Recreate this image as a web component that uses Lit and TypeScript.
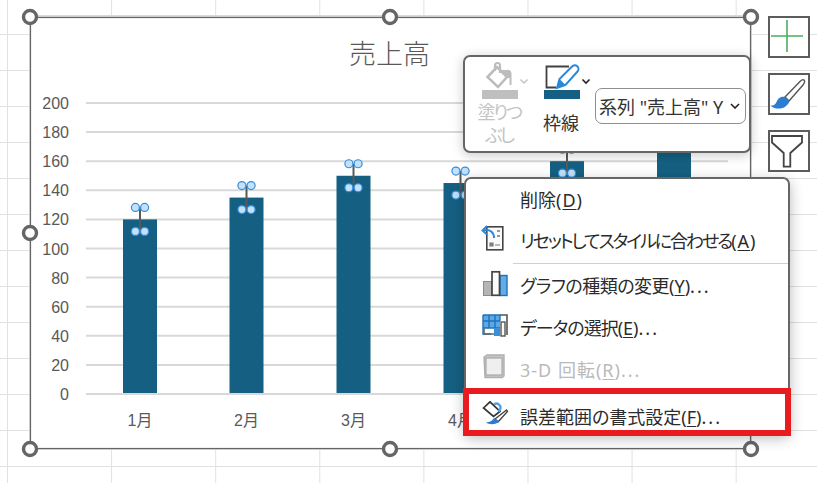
import { LitElement, html, css, svg } from "lit";
import { customElement } from "lit/decorators.js";

const BARS = [
  { label: "1月", x: 140, value: 120 },
  { label: "2月", x: 246.5, value: 135 },
  { label: "3月", x: 353.5, value: 150 },
  { label: "4月", x: 460.5, value: 145 },
  { label: "", x: 567, value: 160 },
  { label: "", x: 674, value: 180 },
];
const TICKS = [200, 180, 160, 140, 120, 100, 80, 60, 40, 20, 0];
const HANDLES = [
  [30, 17], [390, 17], [751, 17],
  [30, 233], [30, 449], [390, 449], [751, 449],
];
const yOf = (v: number) => 394 - v * 1.455;

@customElement("chart-view")
class ChartView extends LitElement {
  static styles = css`
    :host { display: block; }
    svg { display: block; }
    .tick { font: 16px "Liberation Sans", sans-serif; fill: #595959; text-anchor: end; }
    .cat { font: 16px "Liberation Sans", "Noto Sans CJK JP", sans-serif; fill: #595959; text-anchor: middle; }
    .title { font: 300 27px "Noto Sans CJK JP", sans-serif; fill: #595959; text-anchor: middle; }
  `;

  pair(cx: number, cy: number) {
    return svg`
      <circle cx=${cx - 4.6} cy=${cy} r="4" fill="#c5e0f7" stroke="#2f8fe0" stroke-width="1.2"></circle>
      <circle cx=${cx + 4.6} cy=${cy} r="4" fill="#c5e0f7" stroke="#2f8fe0" stroke-width="1.2"></circle>`;
  }

  render() {
    return html`<svg width="817" height="483" viewBox="0 0 817 483">
      <rect x="30" y="16" width="721" height="433" fill="#fff" stroke="#d9d9d9" stroke-width="2"></rect>
      <rect x="30.5" y="17.5" width="720" height="431" fill="none" stroke="#666" stroke-width="1.2"></rect>
      <text class="title" x="389.5" y="64">売上高</text>
      ${TICKS.map((t) => svg`
        <line x1="86" x2="728" y1=${yOf(t)} y2=${yOf(t)} stroke="#d9d9d9" stroke-width="2"></line>
        <text class="tick" x="69" y=${yOf(t) + 6}>${t}</text>`)}
      ${BARS.map((b) => svg`
        <rect x=${b.x - 17} y=${yOf(b.value)} width="34" height=${393 - yOf(b.value)} fill="#156082"></rect>
        <text class="cat" x=${b.x} y="426">${b.label}</text>`)}
      ${BARS.map((b) => svg`
        <line x1=${b.x} x2=${b.x} y1=${yOf(b.value) - 12} y2=${yOf(b.value) + 12} stroke="#595959" stroke-width="2"></line>
        ${this.pair(b.x, yOf(b.value) - 12)}
        ${this.pair(b.x, yOf(b.value) + 12)}`)}
      ${HANDLES.map(([x, y]) => svg`
        <circle cx=${x} cy=${y} r="6.5" fill="#fff" stroke="#666" stroke-width="3.4"></circle>`)}
    </svg>`;
  }
}

@customElement("chart-toolbar")
class ChartToolbar extends LitElement {
  static styles = css`
    :host {
      position: absolute; left: 463px; top: 55px;
      box-sizing: border-box; width: 288px; height: 98px;
      display: flex; align-items: flex-start;
      padding: 3px 0 0 5px;
      background: #fff;
      border: 2px solid #666;
      border-radius: 7px;
      box-shadow: 0 2px 12px rgba(0, 0, 0, .22);
      font-family: "Noto Sans", "Noto Sans CJK JP", sans-serif;
      font-feature-settings: "palt";
      color: #333;
    }
    .col { display: flex; flex-direction: column; align-items: center; }
    .fill { width: 62px; margin-right: 2px; color: #c4c4c4; }
    .line { width: 60px; margin-right: 1px; }
    svg { display: block; }
    .label { font-size: 18px; line-height: 23px; text-align: center; white-space: nowrap; }
    .fill .label { margin: 1px 4px 0 0; letter-spacing: -2.3px; }
    .line .label { margin: 12px 6px 0 0; }
    .picker {
      box-sizing: border-box; width: 151px; height: 36px; margin-top: 28px;
      display: flex; align-items: center; justify-content: space-between;
      padding: 0 5px 0 3px;
      border: 1px solid #8f8f8f; border-radius: 7px;
      font-size: 18px; white-space: nowrap; color: #333;
    }
  `;

  render() {
    return html`
      <div class="col fill">
        <svg width="62" height="40" viewBox="470 60 62 40">
          <path d="M487.5 77 L497 67 L507 77 L498 87 Z" fill="#fff" stroke="#bdbdbd" stroke-width="2.6"></path>
          <path d="M495 71 V65.5 a2.5 2.5 0 0 1 5 0 V73" fill="none" stroke="#bdbdbd" stroke-width="2.2"></path>
          <path d="M501 70 h6 a3.5 3.5 0 0 1 4.5 3.5 V85 h-2 V78 h-3 Z" fill="#bdbdbd"></path>
          <rect x="482" y="90" width="36" height="9" fill="#bfbfbf"></rect>
          <path d="M520.5 79.5 L524 83 L527.5 79.5" fill="none" stroke="#c4c4c4" stroke-width="1.5"></path>
        </svg>
        <div class="label">塗りつ<br />ぶし</div>
      </div>
      <div class="col line">
        <svg width="60" height="40" viewBox="534 60 60 40">
          <path d="M569 66.5 H546.5 V87.5 H556" fill="none" stroke="#404040" stroke-width="1.8"></path>
          <path d="M557 88 L559.5 79 L572 66.5 a3.6 3.6 0 0 1 5.5 5 L565.5 85 Z" fill="#fff" stroke="#2b88d8" stroke-width="2"></path>
          <path d="M557 88 L559.5 79 L565.5 85 Z" fill="#2b88d8"></path>
          <rect x="544" y="90" width="36" height="9" fill="#156082"></rect>
          <path d="M582.5 79.5 L586 83 L589.5 79.5" fill="none" stroke="#222" stroke-width="1.6"></path>
        </svg>
        <div class="label">枠線</div>
      </div>
      <div class="picker">
        <span>系列 "売上高" Y</span>
        <svg width="10" height="6" viewBox="0 0 10 6"><path d="M1 1 L5 5 L9 1" fill="none" stroke="#222" stroke-width="1.6"></path></svg>
      </div>
    `;
  }
}

const ICONS = {
  reset: svg`
    <rect x="5.8" y="1.8" width="16" height="23" fill="#fafafa" stroke="#444" stroke-width="1.6"></rect>
    <path d="M16 6 h3 M16 11 h3" stroke="#777" stroke-width="1.6"></path>
    <path d="M9 18 h3 v3 h-3 Z M14 20 h5" fill="#888" stroke="#777" stroke-width="1.2"></path>
    <path d="M13 13 C13 7 9 4 2.5 5.5" fill="none" stroke="#2b88d8" stroke-width="2"></path>
    <path d="M6 1 L1.5 5.5 L6 9.5" fill="none" stroke="#2b88d8" stroke-width="2"></path>`,
  chart: svg`
    <rect x="2.5" y="11.5" width="8" height="14" fill="#b5b5b5" stroke="#8c8c8c"></rect>
    <rect x="19" y="5.5" width="7" height="20" fill="#63ade6" stroke="#1f72bd" stroke-width="1.4"></rect>
    <rect x="11" y="1.8" width="7.5" height="23.5" fill="#fafafa" stroke="#444" stroke-width="1.7"></rect>`,
  data: svg`
    <rect x="2" y="3" width="17" height="13" fill="#5ea9e4"></rect>
    <path d="M2 3 H19 V9 M2 3 V22 H10 M8 3 V16 M14 3 V16 M2 9 H19 M2 16 H19" fill="none" stroke="#1f72bd" stroke-width="1.4"></path>
    <path d="M3 16 V22 H13" fill="none" stroke="#666" stroke-width="1.6"></path>
    <path d="M19 3 H26 V23" fill="none" stroke="#555" stroke-width="1.6"></path>
    <rect x="13" y="16" width="6" height="8" fill="#3a8fd8"></rect>
    <rect x="20" y="10" width="4" height="14" fill="#fafafa" stroke="#555" stroke-width="1.4"></rect>`,
  rotate: svg`
    <path d="M3 3 L6 1 H23 V22 L21 23.5 H4 Z" fill="#c6c6c6" stroke="#b0b0b0" stroke-width="1.4"></path>
    <rect x="5" y="4" width="16" height="17" fill="#efefef" stroke="#a8a8a8" stroke-width="1.2"></rect>`,
  format: svg`
    <path d="M2.5 7 L9 .8 L19 10.5 L12.5 15.5 Z" fill="#fff" stroke="#333" stroke-width="1.7"></path>
    <path d="M13 3.5 a4 4 0 0 1 6 5 l-1.5 2" fill="none" stroke="#4ea1e4" stroke-width="2.4"></path>
    <path d="M25.5 9 L14 18 L17 21 L26.5 10.5 Z" fill="#fff" stroke="#444" stroke-width="1.4"></path>
    <path d="M13 17 C11 20 9 21 5 21.5 C8 24 16 24 18 20 Z" fill="#2b7cd3"></path>`,
};

@customElement("context-menu")
class ContextMenu extends LitElement {
  static styles = css`
    :host {
      position: absolute; left: 464px; top: 177px;
      box-sizing: border-box; width: 326px;
      background: #fff;
      border: 2px solid #666;
      border-radius: 7px;
      box-shadow: 0 4px 14px rgba(0, 0, 0, .28);
      font-family: "Noto Sans", "Noto Sans CJK JP", sans-serif;
      font-feature-settings: "palt";
      font-size: 18px;
      color: #2b2b2b;
    }
    .row {
      box-sizing: border-box; height: 42px;
      display: flex; align-items: center; gap: 9px;
      padding-left: 15px;
      white-space: nowrap;
    }
    .row.first { height: 40px; }
    .row svg { display: block; flex: none; }
    .row.off { color: #bababa; }
    u { text-underline-offset: 2px; text-decoration-thickness: 1px; }
    .dots { letter-spacing: 2px; }
    .key { letter-spacing: 1px; }
    .sep { height: 1px; margin: 2px 0 0 47px; background: #d0d0d0; }
    .row.picked {
      height: 48px;
      margin: -2px -3px -4px -3px;
      padding: 8px 0 0 12px;
      background: #fff;
      border: 6px solid #e81c1f;
    }
    .k1 { letter-spacing: -2.1px; }
    .k2 { letter-spacing: -.5px; }
    .k3 { letter-spacing: -1px; }
    .wide { letter-spacing: 1px; }
  `;

  row(label: unknown, icon: unknown, cls = "") {
    return html`<div class="row ${cls}">
      <svg width="30" height="30" viewBox="0 0 30 30">${icon}</svg>
      <span>${label}</span>
    </div>`;
  }

  render() {
    const dots = html`<span class="dots">...</span>`;
    return html`
      ${this.row(html`削除<span class="key">(<u>D</u>)</span>`, null, "first")}
      ${this.row(html`<span class="k1">リセットしてスタイルに合わせる</span><span class="key">(<u>A</u>)</span>`, ICONS.reset)}
      <div class="sep"></div>
      ${this.row(html`<span class="k2">グラフの種類の変更</span>(<u>Y</u>)${dots}`, ICONS.chart)}
      ${this.row(html`<span class="k3">データの選択</span>(<u>E</u>)${dots}`, ICONS.data)}
      ${this.row(html`<span class="wide">3-D 回転(<u>R</u>)</span>${dots}`, ICONS.rotate, "off")}
      ${this.row(html`誤差範囲の書式設定(<u>F</u>)${dots}`, ICONS.format, "picked")}
    `;
  }
}

@customElement("app-root")
export class AppRoot extends LitElement {
  static styles = css`
    :host {
      display: block; position: relative;
      width: 817px; height: 483px; overflow: hidden;
      background-color: #fff;
      background-image:
        linear-gradient(to right, #e1e1e1 1px, transparent 1px),
        linear-gradient(to bottom, #e1e1e1 1px, transparent 1px);
      background-size: 104.1px 36px;
      background-position: 7px -2px;
    }
    .side {
      position: absolute; left: 768px; top: 16px;
      display: flex; flex-direction: column; gap: 15px;
    }
    .side div {
      box-sizing: border-box; width: 42px; height: 42px;
      background: #fff; border: 2px solid #5c5c5c;
    }
    .side svg { display: block; }
  `;

  render() {
    return html`
      <chart-view></chart-view>
      <div class="side">
        <div><svg width="38" height="38" viewBox="0 0 38 38">
          <path d="M1 18 H33 M17 2 V34" stroke="#4caf62" stroke-width="1.6" fill="none"></path>
        </svg></div>
        <div><svg width="38" height="38" viewBox="0 0 38 38">
          <path d="M34 5 C33 4 31.5 5 30 6.5 L15 22 L19 26 L33 10 C34.5 8 35 6 34 5 Z" fill="#fff" stroke="#555" stroke-width="1.4"></path>
          <path d="M15 22 C10 21 8 24 6.5 27 C5 30 3 31 .5 30.5 C3 34 12 35 16 31 C18.5 29 19.5 27 19 26 Z" fill="#2b7cd3"></path>
        </svg></div>
        <div><svg width="38" height="38" viewBox="0 0 38 38">
          <path d="M2 4 H32 V10.5 L20.3 21 V34.6 H13.7 V21 L2 10.5 Z" fill="#fff" stroke="#444" stroke-width="1.8"></path>
        </svg></div>
      </div>
      <chart-toolbar></chart-toolbar>
      <context-menu></context-menu>
    `;
  }
}
